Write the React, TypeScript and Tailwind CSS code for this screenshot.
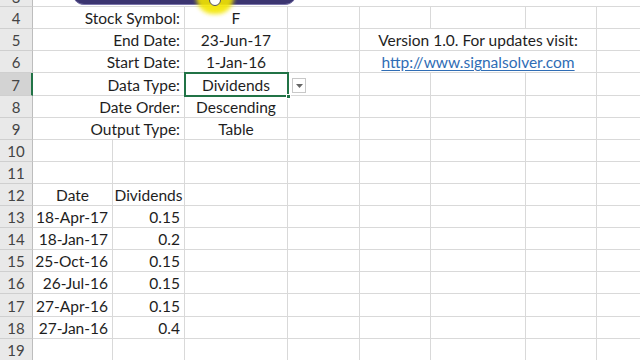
import type { ReactNode } from "react";

const COLS = [80, 72, 103, 72, 71, 95, 71];

type Cell = {
  span?: number;
  align?: "left" | "center" | "right";
  content?: ReactNode;
};

type RowDef = { num: number; h: number; cells: Cell[]; selected?: boolean };

const plain = (n: number): Cell[] => Array.from({ length: n }, () => ({}));

function label(text: string, value: string, extra: Cell[] = plain(4)): Cell[] {
  return [
    { span: 2, align: "right", content: text },
    { align: "center", content: value },
    ...extra,
  ];
}

const rows: RowDef[] = [
  { num: 4, h: 22, cells: label("Stock Symbol:", "F") },
  {
    num: 5,
    h: 22,
    cells: label("End Date:", "23-Jun-17", [{}, { span: 3, align: "center", content: "Version 1.0. For updates visit:" }]),
  },
  {
    num: 6,
    h: 22,
    cells: label("Start Date:", "1-Jan-16", [
      {},
      {
        span: 3,
        align: "center",
        content: <span className="text-[#2f6db5] underline underline-offset-2">http://www.signalsolver.com</span>,
      },
    ]),
  },
  { num: 7, h: 23, selected: true, cells: label("Data Type:", "Dividends") },
  { num: 8, h: 22, cells: label("Date Order:", "Descending") },
  { num: 9, h: 22, cells: label("Output Type:", "Table") },
  { num: 10, h: 22, cells: plain(7) },
  { num: 11, h: 22, cells: plain(7) },
  {
    num: 12,
    h: 22,
    cells: [{ align: "center", content: "Date" }, { align: "center", content: "Dividends" }, ...plain(5)],
  },
  ...[
    ["18-Apr-17", "0.15"],
    ["18-Jan-17", "0.2"],
    ["25-Oct-16", "0.15"],
    ["26-Jul-16", "0.15"],
    ["27-Apr-16", "0.15"],
    ["27-Jan-16", "0.4"],
  ].map(([d, v], i) => ({
    num: 13 + i,
    h: i === 4 ? 23 : 22,
    cells: [{ align: "right" as const, content: d }, { align: "right" as const, content: v }, ...plain(5)],
  })),
  { num: 19, h: 22, cells: plain(7) },
];

function SheetRow({ row }: { row: RowDef }) {
  let col = 0;
  return (
    <div className="flex leading-[20px]" style={{ height: row.h }}>
      <div
        className={`flex w-[33px] shrink-0 items-end justify-center border-b border-[#cfcfcf] text-[15px] text-[#444] ${
          row.selected ? "border-r-2 border-r-[#217346] bg-[#d3d3d3]" : "border-r border-r-[#bdbdbd] bg-[#e9e9e9]"
        }`}
      >
        {row.num}
      </div>
      {row.cells.map((c, i) => {
        const span = c.span ?? 1;
        const w = COLS.slice(col, col + span).reduce((a, b) => a + b, 0);
        col += span;
        const justify =
          c.align === "right" ? "justify-end pr-[4px]" : c.align === "center" ? "justify-center" : "justify-start pl-1";
        return (
          <div
            key={i}
            className={`flex shrink-0 items-end whitespace-nowrap border-b border-r border-[#d9d9d9] ${justify}`}
            style={{ width: w }}
          >
            {c.content}
          </div>
        );
      })}
      <div className="flex-1 border-b border-[#d9d9d9]" />
    </div>
  );
}

export default function App() {
  return (
    <div
      className="relative h-[360px] w-[640px] overflow-hidden bg-white text-[15.5px] text-[#1e1e1e]"
      style={{ fontFamily: "Lato, 'Open Sans', sans-serif" }}
    >
      {/* row 3, mostly hidden under the button */}
      <div className="flex h-[7px]">
        <div className="w-[33px] shrink-0 overflow-hidden border-b border-r border-[#cfcfcf] border-r-[#bdbdbd] bg-[#e9e9e9] text-center text-[15px] leading-[6px] text-[#444]">
          <span className="relative top-[-6px]">3</span>
        </div>
        <div className="flex-1 border-b border-[#d9d9d9]" />
      </div>
      {rows.map((r) => (
        <SheetRow key={r.num} row={r} />
      ))}

      {/* shape button overlapping the top */}
      <div className="absolute left-[72px] top-[-20px] h-[25px] w-[225px] rounded-[12px] border border-[#7a74aa] bg-[#3b3570]" />
      <div className="absolute left-[196px] top-[-20px] h-[34px] w-[38px] rounded-full bg-[#f3e600] opacity-90 blur-[2px]" />
      <div className="absolute left-[209px] top-[-6px] h-[12px] w-[12px] rounded-full border border-[#555] bg-white" />

      {/* active cell C7 */}
      <div className="absolute left-[184px] top-[72px] h-[25px] w-[105px] border-2 border-[#217346]" />
      <div className="absolute left-[286px] top-[94px] h-[5px] w-[5px] border border-white bg-[#217346]" />
      <div className="absolute left-[292px] top-[78px] flex h-[15px] w-[14px] items-center justify-center border border-[#c8c8c8] bg-white">
        <svg width="7" height="4" viewBox="0 0 7 4">
          <path d="M0 0h7L3.5 4z" fill="#666" />
        </svg>
      </div>
    </div>
  );
}
